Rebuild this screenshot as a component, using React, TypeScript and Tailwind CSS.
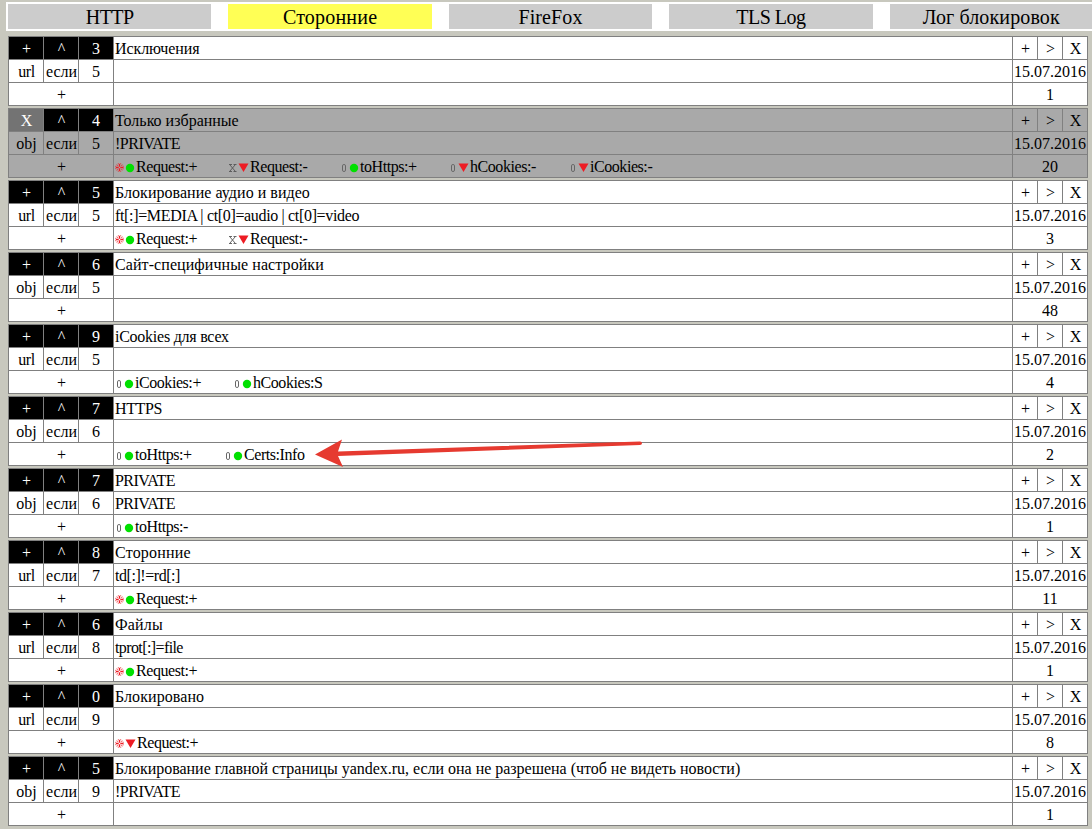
import React from "react";

type Mark = "globe" | "x" | "0";
type Tag = { mark: Mark; on: boolean; text: string; width: string };
type Rule = {
  level: number;
  title: string;
  kind: "url" | "obj";
  weight: number;
  expr?: string;
  count: number;
  tags?: Tag[];
  disabled?: boolean;
  titleTracking?: string;
  exprTracking?: string;
};

const requestOn: Tag = { mark: "globe", on: true, text: "Request:+", width: "w-[113px]" };

const rules: Rule[] = [
  { level: 3, title: "Исключения", kind: "url", weight: 5, count: 1, titleTracking: "tracking-[-0.1px]" },
  {
    level: 4, title: "Только избранные", kind: "obj", weight: 5, expr: "!PRIVATE", count: 20, disabled: true,
    exprTracking: "tracking-[-0.5px]",
    tags: [
      requestOn,
      { mark: "x", on: false, text: "Request:-", width: "w-[112px]" },
      { mark: "0", on: true, text: "toHttps:+", width: "w-[109px]" },
      { mark: "0", on: false, text: "hCookies:-", width: "w-[120px]" },
      { mark: "0", on: false, text: "iCookies:-", width: "w-[120px]" },
    ],
  },
  {
    level: 5, title: "Блокирование аудио и видео", kind: "url", weight: 5, titleTracking: "tracking-[0.04px]",
    expr: "ft[:]=MEDIA | ct[0]=audio | ct[0]=video", exprTracking: "tracking-[-0.34px]", count: 3,
    tags: [requestOn, { mark: "x", on: false, text: "Request:-", width: "w-[112px]" }],
  },
  { level: 6, title: "Сайт-специфичные настройки", kind: "obj", weight: 5, count: 48, titleTracking: "tracking-[0.08px]" },
  {
    level: 9, title: "iCookies для всех", kind: "url", weight: 5, count: 4, titleTracking: "tracking-[-0.25px]",
    tags: [
      { mark: "0", on: true, text: "iCookies:+", width: "w-[118px]" },
      { mark: "0", on: true, text: "hCookies:S", width: "w-[120px]" },
    ],
  },
  {
    level: 7, title: "HTTPS", kind: "obj", weight: 6, count: 2, titleTracking: "tracking-[-0.4px]",
    tags: [
      { mark: "0", on: true, text: "toHttps:+", width: "w-[109px]" },
      { mark: "0", on: true, text: "Certs:Info", width: "w-[120px]" },
    ],
  },
  {
    level: 7, title: "PRIVATE", kind: "obj", weight: 6, expr: "PRIVATE", count: 1,
    titleTracking: "tracking-[-0.55px]", exprTracking: "tracking-[-0.55px]",
    tags: [{ mark: "0", on: true, text: "toHttps:-", width: "w-[109px]" }],
  },
  {
    level: 8, title: "Сторонние", kind: "url", weight: 7, expr: "td[:]!=rd[:]", count: 11, tags: [requestOn],
    titleTracking: "tracking-[0.2px]", exprTracking: "tracking-[-0.45px]",
  },
  {
    level: 6, title: "Файлы", kind: "url", weight: 8, expr: "tprot[:]=file", count: 1, tags: [requestOn],
    titleTracking: "tracking-[0.15px]", exprTracking: "tracking-[-0.6px]",
  },
  {
    level: 0, title: "Блокировано", kind: "url", weight: 9, count: 8, titleTracking: "tracking-[0.08px]",
    tags: [{ mark: "globe", on: false, text: "Request:+", width: "w-[113px]" }],
  },
  {
    level: 5, title: "Блокирование главной страницы yandex.ru, если она не разрешена (чтоб не видеть новости)",
    kind: "obj", weight: 9, expr: "!PRIVATE", count: 1,
    titleTracking: "tracking-[-0.02px]", exprTracking: "tracking-[-0.5px]",
  },
];

function MarkIcon({ mark }: { mark: Mark }) {
  if (mark === "globe") {
    return (
      <svg width="10" height="9" viewBox="0 0 10 9" fill="none" className="mt-[3px] shrink-0" stroke="#ed1c24">
        <circle cx="4.500" cy="4.500" r="4" strokeWidth=".9" strokeOpacity=".75" strokeDasharray="1.3 .8" />
        <path d="M4.500 1v2.700M4.500 5.300v2.700M1 4.500h2.700M5.300 4.500h2.700" strokeWidth="1.400" />
        <path d="M2 2.500h1M6 2.500h1M2 6.500h1M6 6.500h1" strokeWidth="1" strokeOpacity=".6" />
      </svg>
    );
  }
  if (mark === "x") {
    return (
      <svg width="10" height="10" viewBox="0 0 10 10" fill="none" className="mt-[4px] shrink-0" stroke="#555">
        <path d="M2 2l5 6M7 2L2 8M1 1.500h3M5.500 1.500h3M1 8.500h3M5.500 8.500h3" strokeWidth=".9" />
      </svg>
    );
  }
  return (
    <svg width="9" height="10" viewBox="0 0 9 10" fill="none" className="mt-[4px] shrink-0">
      <rect x="2.500" y="1.500" width="3" height="7" rx="1.400" stroke="#666" />
    </svg>
  );
}

function StateIcon({ on }: { on: boolean }) {
  return on ? (
    <svg width="11" height="10" viewBox="0 0 11 10" className="mt-[4px] shrink-0">
      <circle cx="5" cy="5" r="4.200" fill="#00e000" />
    </svg>
  ) : (
    <svg width="12" height="10" viewBox="0 0 12 10" className="mt-[4px] shrink-0">
      <path d="M.5 .5h10L5.500 9z" fill="#ed1c24" />
    </svg>
  );
}

function Block({ rule }: { rule: Rule }) {
  const bg = rule.disabled ? "bg-[#a9a9a9]" : "bg-white";
  const base = `flex items-center justify-center overflow-hidden whitespace-pre pt-[2px] ${bg}`;
  const cell = `${base} pl-px`;
  const dark = "flex items-center justify-center pt-[2px] text-white";
  const text = `${bg} overflow-hidden whitespace-pre pl-px pt-px`;
  return (
    <section className="grid w-[1080px] shrink-0 grid-cols-[34px_34px_34px_898px_24px_24px_24px] grid-rows-[22px_22px_22px] gap-px border border-[#808080] bg-[#808080] leading-[22px]">
      <div className={`${dark} pl-px ${rule.disabled ? "bg-[#737373]" : "bg-black"}`}>{rule.disabled ? "X" : "+"}</div>
      <div className={`${dark} bg-black pl-px`}>^</div>
      <div className={`${dark} bg-black`}>{rule.level}</div>
      <div className={text}><span className={rule.titleTracking}>{rule.title}</span></div>
      <div className={cell}>+</div>
      <div className={cell}>&gt;</div>
      <div className={cell}>X</div>

      <div className={cell}><span className={rule.kind === "url" ? "tracking-[-0.5px]" : ""}>{rule.kind}</span></div>
      <div className={cell}>если</div>
      <div className={base}>{rule.weight}</div>
      <div className={text}><span className={rule.exprTracking}>{rule.expr}</span></div>
      <div className={`${base} col-span-3`}>15.07.2016</div>

      <div className={`${cell} col-span-3`}>+</div>
      <div className={`${bg} flex h-[22px] items-center pl-px`}>
        {rule.tags?.map((t, i) => (
          <div key={i} className={`flex h-[22px] shrink-0 items-center whitespace-pre ${t.width}`}>
            <MarkIcon mark={t.mark} />
            <StateIcon on={t.on} />
            <span className="pt-[2px] tracking-[-0.44px]">{t.text}</span>
          </div>
        ))}
      </div>
      <div className={`${base} col-span-3`}>{rule.count}</div>
    </section>
  );
}

const tabs = [
  { label: "HTTP", look: "bg-[#cccccc] tracking-[-0.5px]" },
  { label: "Сторонние", look: "bg-[#ffff55] tracking-[0.2px]" },
  { label: "FireFox", look: "bg-[#cccccc] tracking-[0.1px]" },
  { label: "TLS Log", look: "bg-[#cccccc] tracking-[-0.5px]" },
  { label: "Лог блокировок", look: "bg-[#cccccc] tracking-[0.12px]" },
];

export default function App() {
  return (
    <div className="relative h-[829px] w-[1092px] overflow-hidden bg-[#c8c8be] pt-[2px] font-['Liberation_Serif',serif] text-[16px] text-black">
      <nav className="ml-[6px] flex h-[29px] gap-[17px] bg-white py-[2px] pl-[2px] text-[20px] leading-[24px]">
        {tabs.map((t) => (
          <div key={t.label} className={`h-[25px] w-[203.4px] shrink-0 pt-px text-center ${t.look}`}>{t.label}</div>
        ))}
      </nav>
      <main className="ml-[8px] mt-[5px] flex flex-col gap-[2px]">
        {rules.map((r, i) => <Block key={i} rule={r} />)}
      </main>
      <svg className="absolute left-[314px] top-[438px]" width="330" height="32" viewBox="0 0 330 32" fill="#e63a30">
        <path d="M1 16.500L28 1.500L24 13.500L326 3.500Q328 3.500 328 5.300Q328 7 326 7L24 18L29 29Z" />
      </svg>
    </div>
  );
}
